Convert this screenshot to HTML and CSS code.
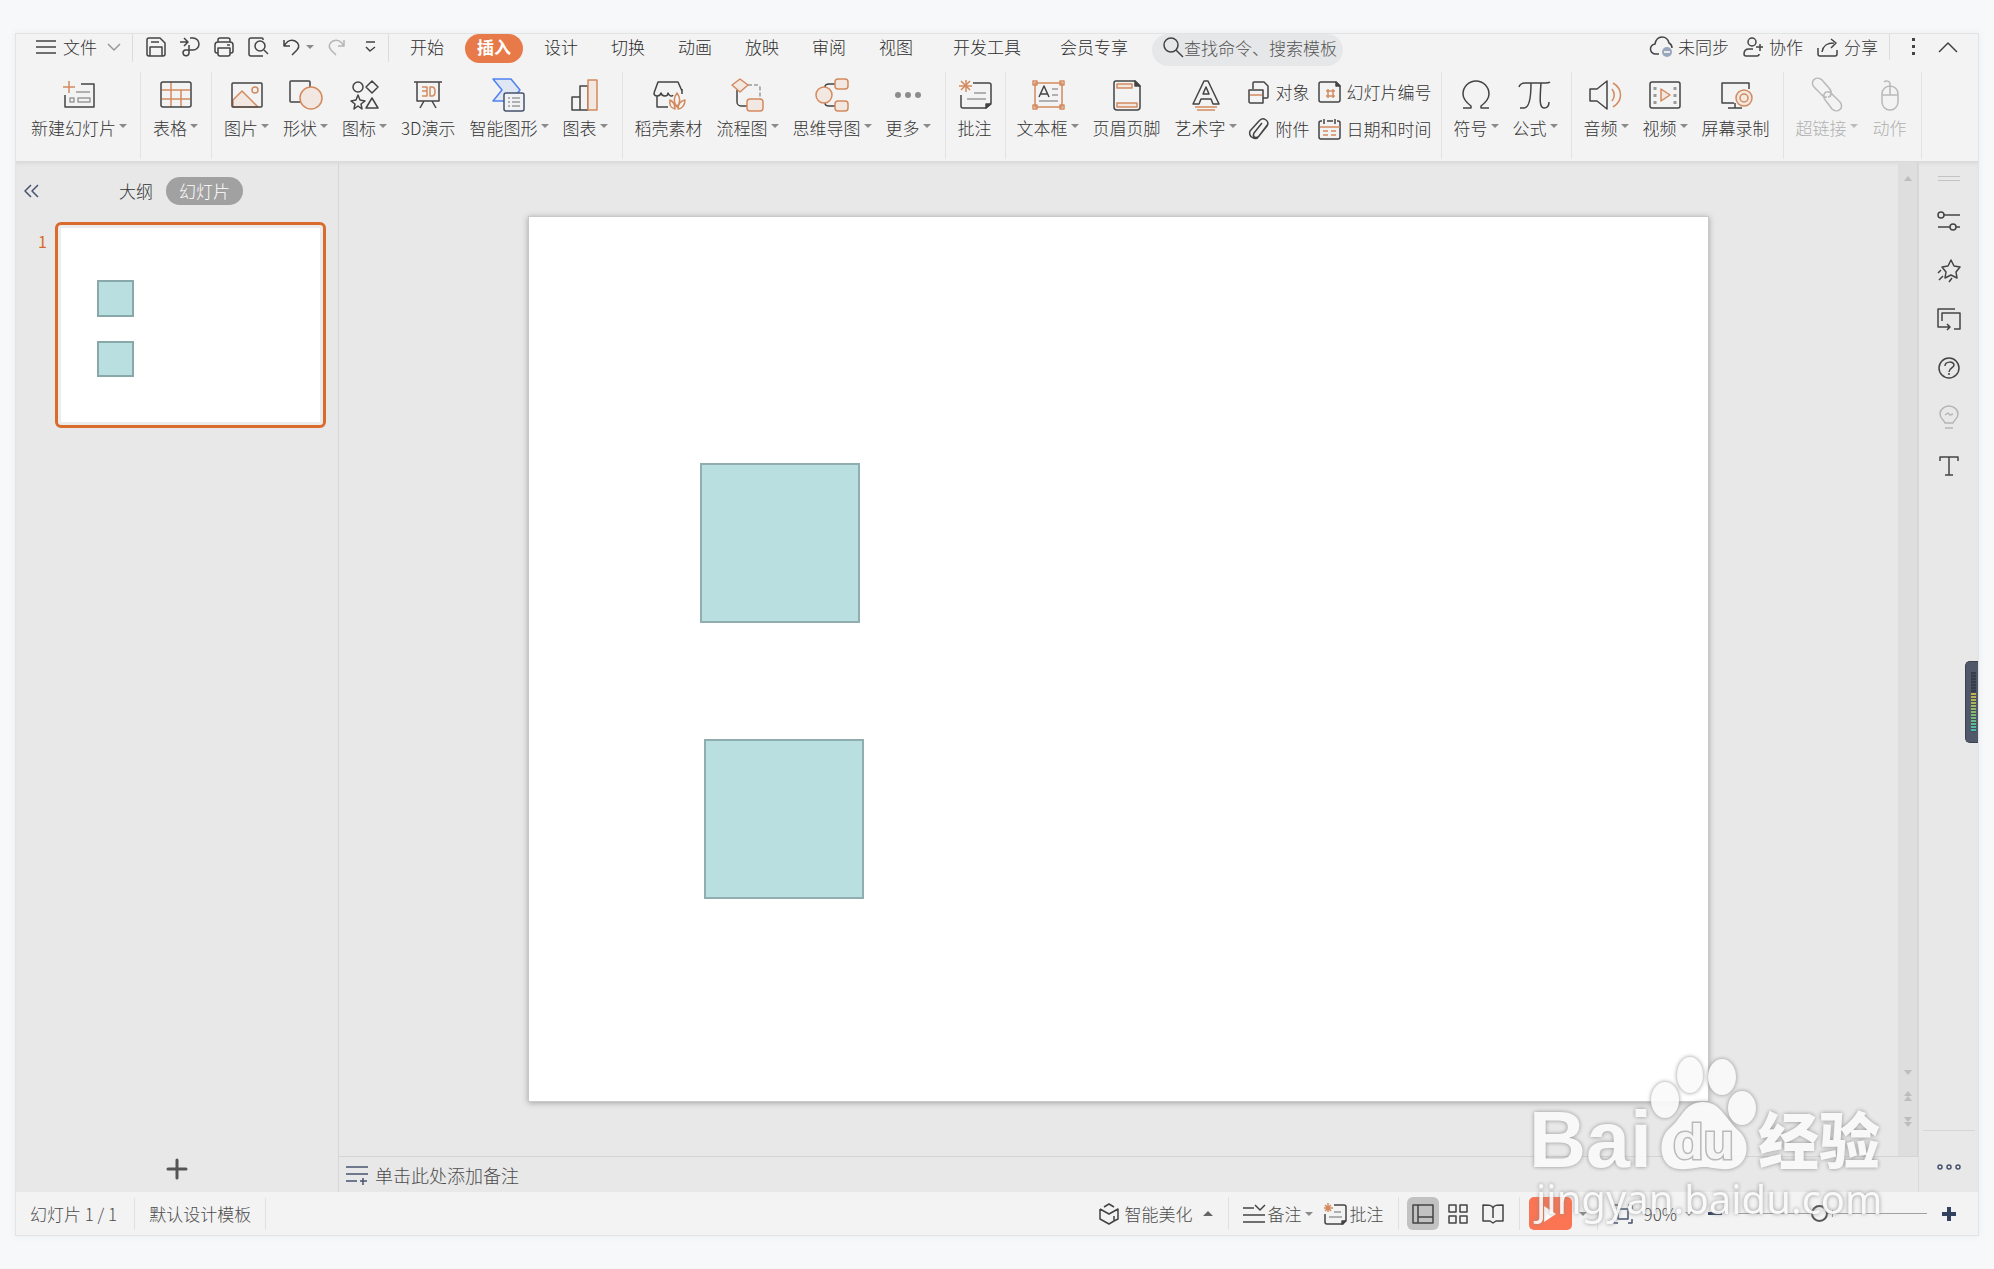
FILE: index.html
```html
<!DOCTYPE html>
<html lang="zh-CN">
<head>
<meta charset="utf-8">
<title>演示文稿</title>
<link rel="stylesheet" href="styles.css">
</head>
<body>
<div class="window">
  <header class="menubar">
    <button class="file-menu"><svg class="i" width="20" height="20" viewBox="0 0 20 20"><path d="M0 4h20M0 10h20M0 16h20"/></svg><span>文件</span><svg class="i faint" width="14" height="10" viewBox="0 0 14 10"><path d="M1 2l6 6 6-6"/></svg></button>
    <div class="quick">
      <button aria-label="保存"><svg class="i" width="20" height="20" viewBox="0 0 20 20"><path d="M3 1h11l5 5v11a2 2 0 0 1-2 2H3a2 2 0 0 1-2-2V3a2 2 0 0 1 2-2zM5 5h8M4 19v-9h12v9"/></svg></button>
      <button aria-label="输出"><svg class="i" width="20" height="20" viewBox="0 0 20 20"><path d="M0 5h7M4 1l4 4-4 4M10 1h3a6 6 0 0 1 0 12H5a3 3 0 1 0 4 3V8"/></svg></button>
      <button aria-label="打印"><svg class="i" width="20" height="20" viewBox="0 0 20 20"><path d="M4 5V3a2 2 0 0 1 2-2h8a2 2 0 0 1 2 2v2M4 16H3a2 2 0 0 1-2-2V8a3 3 0 0 1 3-3h12a3 3 0 0 1 3 3v6a2 2 0 0 1-2 2h-1M4 11h12v6a2 2 0 0 1-2 2H6a2 2 0 0 1-2-2zM13 8h3"/></svg></button>
      <button aria-label="打印预览"><svg class="i" width="21" height="20" viewBox="0 0 21 20"><path d="M15 3V2a1 1 0 0 0-1-1H3a2 2 0 0 0-2 2v14a2 2 0 0 0 2 2h12"/><circle cx="12" cy="9" r="5"/><path d="M16 13l4 4"/></svg></button>
      <button aria-label="撤销" class="undo"><svg class="i" width="17" height="18" viewBox="0 0 17 18"><path d="M1 2v6h6M1 8c3-5 7-7 11-5 4 2 5 6 2 9l-5 5"/></svg><i class="caret"></i></button>
      <button aria-label="恢复"><svg class="i pale" width="17" height="18" viewBox="0 0 17 18"><path d="M16 2v6h-6M16 8c-3-5-7-7-11-5-4 2-5 6-2 9l5 5"/></svg></button>
      <button aria-label="自定义" class="custom"><svg class="i" width="11" height="12" viewBox="0 0 11 12"><path d="M1 1h9M1 6l4 4 5-4"/></svg></button>
    </div>
    <nav class="tabs">
      <button>开始</button><button class="active">插入</button><button>设计</button><button>切换</button><button>动画</button><button>放映</button><button>审阅</button><button>视图</button>
      <div class="extra"><button>开发工具</button><button>会员专享</button></div>
    </nav>
    <label class="search"><svg class="i" width="22" height="22" viewBox="0 0 22 22"><circle cx="9" cy="9" r="7"/><path d="M14 14l7 7"/></svg><input type="text" aria-label="搜索" placeholder="查找命令、搜索模板"></label>
    <div class="account">
      <button><svg class="i" width="23" height="22" viewBox="0 0 23 22"><path d="M9 18H6a5 5 0 0 1-1-10C6 3 9 1 12 1c4 0 6 2 7 6 2 1 3 3 3 5"/><circle cx="17" cy="16" r="5" fill="#9aa6bb" stroke="none"/><path stroke="#fff" d="M14 16h6"/></svg>未同步</button>
      <button><svg class="i" width="21" height="20" viewBox="0 0 21 20"><circle cx="9" cy="5" r="4"/><path d="M10 12H6c-3 0-5 2-5 5 0 1 1 2 2 2h11c1 0 2-1 2-2M17 7v7M13 10h7"/></svg>协作</button>
      <button><svg class="i" width="22" height="20" viewBox="0 0 22 20"><path d="M1 11v6a2 2 0 0 0 2 2h15a2 2 0 0 0 2-2v-4M5 15c1-6 4-9 12-9M14 2l5 4-5 5"/></svg>分享</button>
    </div>
    <button class="more" aria-label="更多选项"><svg width="4" height="18" viewBox="0 0 4 18"><path fill="#444" d="M0 0h3v3H0zM0 7h3v3H0zM0 14h3v3H0z"/></svg></button>
    <button class="fold" aria-label="折叠功能区"><svg class="i" width="20" height="12" viewBox="0 0 20 12"><path d="M1 11l9-9 9 9"/></svg></button>
  </header>

  <section class="ribbon">
    <div class="group first">
      <button class="tool"><svg class="i" viewBox="0 0 36 36"><path d="M20 8h13v23H4V19"/><path class="o" d="M2 11h12M8 5v12"/><path class="g" d="M15 16h14M9 22h4v4H9zM17 22h12v4H17z"/></svg><span>新建幻灯片<i class="caret"></i></span></button>
    </div>
    <div class="group">
      <button class="tool"><svg class="i" viewBox="0 0 36 36"><path class="o" d="M4 14h28M4 23h28M13 6v25M23 14v17"/><rect x="3" y="6" width="30" height="25" rx="2"/></svg><span>表格<i class="caret"></i></span></button>
    </div>
    <div class="group roomy">
      <button class="tool"><svg class="i" viewBox="0 0 36 36"><path class="of" d="M4 24l9-9 16 16H4z"/><circle class="o" cx="26" cy="14" r="3"/><rect x="3" y="7" width="30" height="24" rx="1"/></svg><span>图片<i class="caret"></i></span></button>
      <button class="tool"><svg class="i" viewBox="0 0 36 36"><rect x="2" y="5" width="20" height="21" rx="1"/><circle class="of solid" cx="23" cy="22" r="11"/></svg><span>形状<i class="caret"></i></span></button>
      <button class="tool"><svg class="i" viewBox="0 0 36 36"><circle cx="11" cy="11" r="5"/><path d="M25 5l6 6-6 6-6-6zM25 22l6 10H19zM11 19l2 5 5 1-4 3 1 5-4-3-4 3 1-5-4-3 5-1z"/></svg><span>图标<i class="caret"></i></span></button>
      <button class="tool"><svg class="i" viewBox="0 0 36 36"><path d="M4 6h28M7 6v19h22V6M14 25l-4 7M22 25l4 7"/><path class="o" d="M12 11h5v9h-5M12 15h5M20 11h2c4 0 4 9 0 9h-2z"/></svg><span>3D演示</span></button>
      <button class="tool"><svg class="i" viewBox="0 0 36 36"><path fill="#dfe7f5" stroke="#4f83f0" d="M2 3h18l9 11-9 11H2l9-11z"/><rect x="13" y="17" width="20" height="18" rx="2" fill="#f1f2f5" stroke="#46516b"/><path class="g" d="M17 22h2M17 26h2M17 30h2M21 22h8M21 26h8M21 30h8"/></svg><span>智能图形<i class="caret"></i></span></button>
      <button class="tool"><svg class="i" viewBox="0 0 36 36"><path d="M5 21h8v13H5zM13 10h8v24h-8z"/><path class="of" d="M21 4h9v30h-9z"/></svg><span>图表<i class="caret"></i></span></button>
    </div>
    <div class="group roomy">
      <button class="tool"><svg class="i" viewBox="0 0 36 36"><path d="M17 31H6V20M3 17l4-11h20l4 9M3 17c0 4 6 4 7 0 1 4 7 4 7 0 1 3 4 4 5 2M31 13v5"/><path class="o" d="M26 31c-4-5-3-10 0-14 3 4 4 9 0 14zM24 33c-4-1-6-4-5-9 4 2 5 5 5 9zM27 33c0-5 3-8 7-9 0 5-3 9-7 9z"/></svg><span>稻壳素材</span></button>
      <button class="tool"><svg class="i" viewBox="0 0 36 36"><path d="M7 14v12a4 4 0 0 0 4 4h6"/><path class="g" stroke-dasharray="4 2" d="M18 9h9a3 3 0 0 1 3 3v11"/><path class="of" d="M2 9l8-6 8 6-8 7z"/><rect class="of" x="17" y="23" width="16" height="12" rx="3"/></svg><span>流程图<i class="caret"></i></span></button>
      <button class="tool"><svg class="i" viewBox="0 0 36 36"><path d="M11 11c0-3 2-3 4-3h6M11 27c0 3 2 3 4 3h6"/><circle class="of" cx="10" cy="19" r="8"/><rect class="of" x="21" y="3" width="13" height="10" rx="3"/><rect class="of" x="21" y="25" width="13" height="10" rx="3"/></svg><span>思维导图<i class="caret"></i></span></button>
      <button class="tool"><svg viewBox="0 0 36 36"><g fill="#8c8c8c"><circle cx="8" cy="19" r="3"/><circle cx="18" cy="19" r="3"/><circle cx="28" cy="19" r="3"/></g></svg><span>更多<i class="caret"></i></span></button>
    </div>
    <div class="group tight">
      <button class="tool"><svg class="i" viewBox="0 0 36 36"><path d="M16 7h16a2 2 0 0 1 2 2v18l-5 5H6a2 2 0 0 1-2-2V19"/><path fill="#444" d="M29 32v-4h5z"/><path class="o" d="M9 4v12M2 10h13M4 5l9 9M13 5l-9 9"/><path class="g" d="M17 17h12M10 23h19"/></svg><span>批注</span></button>
    </div>
    <div class="group tight">
      <button class="tool"><svg class="i" viewBox="0 0 36 36"><path class="o" d="M5 7h27v24H5zM3 5h4v4H3zM30 5h4v4h-4zM3 29h4v4H3zM30 29h4v4h-4z"/><path d="M9 21l5-11 5 11M11 18h6"/><path class="g" d="M22 13h6M22 19h6M9 25h19"/></svg><span>文本框<i class="caret"></i></span></button>
      <button class="tool"><svg class="i" viewBox="0 0 36 36"><path d="M7 5h19l5 5v21a3 3 0 0 1-3 3H8a3 3 0 0 1-3-3V7a2 2 0 0 1 2-2z"/><path fill="#444" d="M26 5v5h5z"/><path class="of" d="M8 8h15v4H8zM8 27h20v4H8z"/></svg><span>页眉页脚</span></button>
      <button class="tool"><svg class="i" viewBox="0 0 36 36"><path d="M5 28L16 5h4l11 23h-6l-2-5H13l-2 5zM15 18l3-7 3 7z"/><path class="o" d="M7 31h22M9 34h18"/></svg><span>艺术字<i class="caret"></i></span></button>
      <div class="pairs">
        <button><svg class="i" viewBox="0 0 24 24"><path d="M6 9V3a1 1 0 0 1 1-1h10l4 4v11a1 1 0 0 1-1 1h-4M2 10h14v13H3l-1-1z"/><path class="o" d="M3 15h12"/></svg>对象</button>
        <button><svg class="i" viewBox="0 0 24 24"><path d="M3 2h15l4 4v14a2 2 0 0 1-2 2H3a2 2 0 0 1-2-2V4a2 2 0 0 1 2-2z"/><path fill="#444" d="M18 2v4h4z"/><path class="o" d="M8 11h9M8 16h9M10 9v9M15 9v9"/></svg>幻灯片编号</button>
        <button><svg class="i" viewBox="0 0 24 24"><path d="M21 7l-9 12c-3 5-11 1-9-5l9-10c4-5 11 0 8 5l-8 10c-3 3-7 1-5-3l8-10"/></svg>附件</button>
        <button><svg class="i" viewBox="0 0 24 24"><path d="M4 4H3a2 2 0 0 0-2 2v14a2 2 0 0 0 2 2h17a2 2 0 0 0 2-2V6a2 2 0 0 0-2-2h-1M9 4h6M6 2v5M17 2v5"/><path class="o" d="M2 10h20M5 14h5M13 14h5M5 18h5M13 18h5"/></svg>日期和时间</button>
      </div>
    </div>
    <div class="group">
      <button class="tool"><svg class="i" viewBox="0 0 36 36"><path d="M5 32h8v-2c-4-3-8-7-8-12a13 13 0 0 1 26 0c0 5-4 9-8 12v2h8"/></svg><span>符号<i class="caret"></i></span></button>
      <button class="tool"><svg class="i" viewBox="0 0 36 36"><path d="M2 11c1-3 3-4 6-4h20c3 0 4 0 5-1M14 7c0 17-2 25-7 25H3M24 7c-1 15-2 25 3 25 3 0 5-2 5-6"/></svg><span>公式<i class="caret"></i></span></button>
    </div>
    <div class="group">
      <button class="tool"><svg class="i" viewBox="0 0 36 36"><path d="M2 13h7l10-8v28l-10-8H2z"/><path class="o" d="M24 13c3 4 3 8 0 12M25 7c10 6 10 18 0 24"/></svg><span>音频<i class="caret"></i></span></button>
      <button class="tool"><svg class="i" viewBox="0 0 36 36"><rect x="3" y="6" width="30" height="26" rx="2"/><path class="of" d="M14 13l9 6-9 6z"/><path class="g dots" stroke-dasharray="3 4" d="M8 11v17M28 11v17"/></svg><span>视频<i class="caret"></i></span></button>
      <button class="tool"><svg class="i" viewBox="0 0 36 36"><path d="M16 27H4V7h27v6M10 32h14M17 27v5"/><circle class="of solid" cx="26" cy="22" r="8"/><circle class="o" cx="26" cy="22" r="4"/></svg><span>屏幕录制</span></button>
    </div>
    <div class="group">
      <button class="tool" disabled><svg class="i" viewBox="0 0 36 36"><path d="M18 21c-3 1-4-1-8-5l-5-5c-5-6 3-12 8-7l7 8c4 4 2 9-1 9M18 16c3-1 4 1 8 5l5 5c5 6-3 12-8 7l-6-8c-4-4-2-9 1-9"/></svg><span>超链接<i class="caret"></i></span></button>
      <button class="tool" disabled><svg class="i" viewBox="0 0 36 36"><path d="M10 18a8 8 0 0 1 16 0v8a8 8 0 0 1-16 0zM10 19h16M18 19V8c0-3-4-4-6-2"/></svg><span>动作</span></button>
    </div>
  </section>

  <main class="workspace">
    <aside class="outline">
      <div class="outline-head">
        <button aria-label="收起"><svg class="i navy" width="16" height="14" viewBox="0 0 16 14"><path d="M7 1L1 7l6 6M14 1L8 7l6 6"/></svg></button>
        <div class="outline-tabs"><button>大纲</button><button class="active">幻灯片</button></div>
      </div>
      <div class="thumb-row"><span class="num">1</span>
        <div class="thumb"><div class="page"><i class="shape t1"></i><i class="shape t2"></i></div></div>
      </div>
      <button class="add" aria-label="新建幻灯片"><svg width="22" height="22" viewBox="0 0 22 22"><path fill="none" stroke="#555" stroke-width="3" stroke-linecap="round" d="M2 11h18M11 2v18"/></svg></button>
    </aside>
    <div class="editor">
      <div class="stage-row">
        <div class="stage"><div class="slide"><i class="shape s1"></i><i class="shape s2"></i></div></div>
        <div class="scroll"><i class="up"></i><span></span><i class="down"></i><i class="up"></i><i class="up near"></i><i class="down"></i><i class="down near"></i></div>
      </div>
      <div class="notes"><svg class="i navy" width="22" height="20" viewBox="0 0 22 20"><path d="M0 2h22M0 9h22M0 16h11M14 16h7M17 13v7"/></svg><span>单击此处添加备注</span></div>
    </div>
    <aside class="rail">
      <i class="grip"></i>
      <button aria-label="属性"><svg class="i" viewBox="0 0 24 24"><circle cx="4" cy="6" r="3"/><circle cx="16" cy="18" r="3"/><path d="M7 6h16M1 18h12M19 18h4"/></svg></button>
      <button aria-label="动画"><svg class="i" viewBox="0 0 24 24"><path d="M14 2l3 6 6 1-4 5 1 6-6-3-6 3 1-6-4-5 6-1zM4 12l-3 3M6 18l-4 4M15 20l-3 4"/></svg></button>
      <button aria-label="切换"><svg class="i" viewBox="0 0 24 24"><path d="M18 2H1v18h12M10 17l3 3-3 3M5 14V6h18v16h-6"/></svg></button>
      <button aria-label="帮助"><svg class="i" viewBox="0 0 24 24"><circle cx="12" cy="12" r="10"/><path d="M8 10c0-5 9-5 9-1 0 3-5 3-5 7M12 17v2"/></svg></button>
      <button aria-label="提示"><svg class="i pale" viewBox="0 0 24 24"><path d="M8 18c0-2-5-4-5-9a9 8 0 0 1 18 0c0 5-5 7-5 9zM8 23h8M8 10l3-2 2 2 3-1"/></svg></button>
      <button aria-label="文字"><svg class="i" viewBox="0 0 24 24"><path d="M3 7V3h18v4M12 3v18M8 21h8"/></svg></button>
      <button class="rail-more" aria-label="更多"><svg class="i navy" viewBox="0 0 24 24"><circle cx="3" cy="12" r="2"/><circle cx="12" cy="12" r="2"/><circle cx="21" cy="12" r="2"/></svg></button>
    </aside>
  </main>

  <footer class="status">
    <span class="cell page-no">幻灯片 1 / 1</span><span class="cell">默认设计模板</span>
    <div class="tools">
      <button class="beauty"><svg class="i" width="20" height="22" viewBox="0 0 20 22"><path d="M5 4l5-3 5 3M1 6v10l9 5 5-3M1 6l9 5 9-5v10l-4 2v-5"/></svg>智能美化<i class="caret flip"></i></button>
      <div class="pane">
        <button class="memo"><svg class="i" width="22" height="20" viewBox="0 0 22 20"><path d="M0 4h11M0 11h22M0 18h22M12 1l5 5 5-5"/></svg>备注<i class="caret"></i></button>
        <button class="comment"><svg class="i" width="24" height="22" viewBox="0 0 24 22"><path d="M11 2h10a2 2 0 0 1 2 2v13l-3 4H4a2 2 0 0 1-2-2v-8"/><path fill="#444" d="M19 21v-3h4z"/><path class="o" d="M5 0v9M1 5h9M2 2l6 6M8 2L2 8"/><path class="g" d="M11 9h7M6 14h13"/></svg>批注</button>
      </div>
      <div class="views">
        <button class="view active" aria-label="普通视图"><svg class="i" width="20" height="20" viewBox="0 0 20 20"><path d="M0 1h20v18H0zM5 1v18M5 13h15"/></svg></button>
        <button class="view" aria-label="幻灯片浏览"><svg class="i" width="20" height="20" viewBox="0 0 20 20"><path d="M1 1h7v7H1zM12 1h7v7h-7zM1 12h7v7H1zM12 12h7v7h-7z"/></svg></button>
        <button class="view" aria-label="阅读视图"><svg class="i" width="22" height="20" viewBox="0 0 22 20"><path d="M11 4c-1-3-4-3-10-3v16h7l3 2 3-2h7V1c-6 0-9 0-10 3v10"/></svg></button>
      </div>
      <div class="show"><button class="play" aria-label="放映"><svg width="14" height="18" viewBox="0 0 14 18"><path fill="#fff" d="M1 1l12 8-12 8z"/></svg></button><i class="caret"></i></div>
      <div class="zoom">
        <button aria-label="适应窗口"><svg class="i navy" width="20" height="20" viewBox="0 0 20 20"><path d="M1 5V1h4M15 1h4v4M19 15v4h-4M5 19H1v-4M5 5h10v10H5z"/></svg></button>
        <button class="pct">90%<i class="caret"></i></button>
        <button aria-label="缩小"><svg width="14" height="14" viewBox="0 0 14 14"><path fill="#33425e" d="M0 5h14v3H0z"/></svg></button>
        <input type="range" min="0" max="100" value="43" aria-label="缩放">
        <button aria-label="放大"><svg width="14" height="14" viewBox="0 0 14 14"><path fill="#33425e" d="M0 5h5V0h4v5h5v4H9v5H5V9H0z"/></svg></button>
      </div>
    </div>
  </footer>
  <div class="meter"><i></i></div>
</div>

<svg class="watermark" width="370" height="190" viewBox="0 0 370 190">
  <g class="mark">
    <text class="bai" x="-1" y="114">Bai</text>
    <ellipse cx="135" cy="47" rx="14" ry="18"/><ellipse cx="160" cy="22" rx="13" ry="18"/><ellipse cx="192" cy="24" rx="14" ry="18"/><ellipse cx="212" cy="55" rx="14" ry="17"/>
    <path d="M173 49c-18 0-21 16-33 26-13 10-12 40 9 41 12 1 18-2 25-2s14 3 25 2c20-3 22-26 11-37-15-13-19-30-37-30z"/>
    <text class="jy" x="228" y="111">经验</text>
    <text class="url" x="6" y="161">jingyan.baidu.com</text>
  </g>
  <text class="du" x="143" y="106">du</text>
</svg>
</body>
</html>
```
FILE: styles.css
```css
* { box-sizing: border-box; }
body {
  margin: 0;
  min-height: 100vh;
  padding: 33px 15px;
  display: flex;
  flex-direction: column;
  position: relative;
  background: #f7f8fa;
  color: #333;
  font: 300 17px/20px "Noto Sans CJK SC", sans-serif;
}
button, input {
  font: inherit;
  color: inherit;
  background: none;
  border: 0;
  padding: 0;
  margin: 0;
}
button {
  display: inline-flex;
  align-items: center;
  justify-content: center;
  white-space: nowrap;
}
svg { display: block; flex: none; overflow: visible; }
.i { fill: none; stroke: #444; stroke-width: 1.5; stroke-linejoin: round; }
.i .o { stroke: #d38a5e; }
.i .of { stroke: #d38a5e; fill: #f2e7e1; }
.i .g { stroke: #9a9a9a; }
.i .dots { stroke-width: 3; }
.i.faint { stroke: #999; }
.i.pale { stroke: #b5b5b5; }
.i.navy { stroke: #47536e; }
.caret {
  display: inline-block;
  flex: none;
  border: 4px solid transparent;
  border-top-color: #8a8a8a;
  border-bottom: 0;
}
.caret.flip { border-top: 0; border-bottom: 5px solid #666; }

.window {
  flex: 1;
  display: flex;
  flex-direction: column;
  position: relative;
  background: #f3f3f3;
  border: 1px solid #e2e4e4;
  box-shadow: 0 0 8px rgba(0, 0, 0, .05);
}

/* menu bar */
.menubar { display: flex; align-items: flex-start; height: 32px; padding-right: 20px; }
.menubar button { height: 26px; }
.file-menu { padding: 0 11px 0 20px; gap: 7px; }
.file-menu span { margin-right: 3px; }
.quick {
  display: flex;
  gap: 14px;
  height: 28px;
  border: solid #dcdcdc;
  border-width: 0 1px;
  padding: 0 12px 0 13px;
}
.undo { gap: 6px; }
.custom { margin-left: 6px; }
.tabs { display: flex; gap: 9px; padding-left: 9px; color: #2c2c2c; }
.tabs button { padding: 0 12px; }
.tabs .active { height: 29px; padding-bottom: 3px; border-radius: 15px; background: #e87a4a; color: #fff; font-weight: 700; }
.extra { display: flex; gap: 15px; padding: 0 3px 0 7px; }
.search {
  display: flex;
  align-items: center;
  height: 32px;
  width: 191px;
  margin-left: 9px;
  padding: 0 0 6px 10px;
  background: #e6e7e9;
  border-radius: 16px;
}
.search input { flex: 1; min-width: 0; height: 24px; outline: 0; }
.search input::placeholder { color: #555; opacity: 1; }
.account {
  display: flex;
  gap: 14px;
  margin-left: auto;
  padding-right: 11px;
  border-right: 1px solid #dcdcdc;
}
.account button { gap: 5px; }
.more { padding: 0 22px; }

/* ribbon */
.ribbon { display: flex; height: 96px; border-bottom: 1px solid #dadada; padding: 6px 0 2px; }
.group {
  display: flex;
  align-items: flex-start;
  gap: 14px;
  padding: 4px 13px 0 12px;
  border-right: 1px solid #e3e3e3;
}
.group.first { padding-left: 15px; }
.group.roomy { padding-right: 14px; }
.group.tight { padding: 4px 12px 0 11px; }
.tool { flex-direction: column; gap: 6px; }
.tool svg { width: 36px; height: 36px; }
.tool span { display: flex; align-items: center; gap: 3px; }
.tool .caret { margin-bottom: 4px; }
.tool .solid { fill: #f2e7e1; }
.tool:disabled { color: #b0b0b0; }
.tool:disabled .i { stroke: #b9b9b9; }
.tool:disabled .caret { border-top-color: #bbb; }
.pairs { display: grid; grid-template-columns: auto auto; gap: 13px 8px; padding-top: 4px; margin: 0 -3px 0 -4px; }
.pairs button { gap: 5px; justify-content: flex-start; }
.pairs svg { width: 24px; height: 24px; }

/* workspace */
.workspace { flex: 1; display: flex; background: #e8e8e8; box-shadow: inset 0 3px 3px -1px #dcdcdc; }
.outline { width: 323px; display: flex; flex-direction: column; border-right: 1px solid #d6d6d6; }
.outline-head { display: flex; align-items: center; padding: 15px 8px 0; }
.outline-tabs { display: flex; margin-left: 66px; }
.outline-tabs button { height: 28px; padding: 0 13px; }
.outline-tabs .active { background: #a1a1a1; color: #fff; border-radius: 14px; }
.thumb-row { display: flex; margin: 17px 12px 0 22px; }
.num { width: 17px; padding-top: 9px; font-size: 16px; font-weight: 400; color: #d96a2b; }
.thumb { flex: 1; border: 3px solid #d96c2d; border-radius: 6px; padding: 3px; background: #ececec; }
.page, .slide { position: relative; background: #fff; }
.page { aspect-ratio: 4 / 3; }
.shape { position: absolute; background: #badfe1; border: 2px solid #88a8aa; width: 14%; aspect-ratio: 1; }
.t1 { left: 14%; top: 27%; }
.t2 { left: 14%; top: 58%; }
.add { margin: auto 0 12px; align-self: center; }
.editor { flex: 1; display: flex; flex-direction: column; min-width: 0; }
.stage-row { flex: 1; display: flex; }
.stage { flex: 1; display: flex; align-items: center; justify-content: center; }
.slide { width: 75.6%; aspect-ratio: 4 / 3; box-shadow: 0 0 0 1px #c9c9c9, 0 1px 6px 1px #a4a4a4; }
.slide .shape { width: 160px; border-color: #90aeb0; }
.s1 { left: 14.5%; top: 27.8%; }
.s2 { left: 14.8%; top: 59%; }
.scroll {
  width: 20px;
  display: flex;
  flex-direction: column;
  align-items: center;
  background: #dedede;
  border-right: 1px solid #d4d4d4;
  padding: 14px 0 29px;
}
.scroll span { flex: 1; }
.scroll i { border: 4px solid transparent; margin-bottom: 16px; }
.scroll .up { border-top: 0; border-bottom: 5px solid #bdbdbd; }
.scroll .down { border-bottom: 0; border-top: 5px solid #bdbdbd; }
.scroll i:nth-last-child(2), .scroll i:nth-last-child(4) { margin-bottom: 0; }
.scroll .near:last-child { margin-bottom: 0; }
.notes {
  display: flex;
  align-items: center;
  gap: 7px;
  height: 36px;
  padding: 0 0 0 7px;
  border-top: 1px solid #d4d4d4;
  font-size: 18px;
  color: #4c4c4c;
}
.rail { width: 60px; display: flex; flex-direction: column; align-items: center; gap: 25px; padding-top: 14px; border-left: 1px solid #dadada; }
.grip { width: 22px; height: 5px; border: solid #c3c3c3; border-width: 1px 0; margin-bottom: 3px; }
.rail svg { width: 24px; height: 24px; }
.rail-more { margin-top: auto; width: 52px; height: 62px; padding-top: 10px; border-top: 1px solid #d6d6d6; }

/* status bar */
.status { display: flex; align-items: center; height: 43px; color: #4c4c4c; }
.cell { line-height: 32px; padding: 0 14px; border-right: 1px solid #e0e0e0; }
.page-no { padding-right: 17px; }
.tools { margin-left: auto; display: flex; align-items: center; padding-right: 22px; }
.tools > * { display: flex; align-items: center; height: 33px; }
.tools > :not(:last-child) { border-right: 1px solid #e0e0e0; }
.beauty { gap: 6px; padding-right: 15px; }
.beauty .caret { margin-left: 4px; border-width: 0 5px 5px; }
.pane { padding: 0 14px 0 14px; gap: 10px; }
.memo, .comment { gap: 3px; }
.views { padding: 0 10px 0 8px; gap: 3px; }
.view { width: 32px; height: 33px; border-radius: 6px; }
.view.active { background: #c2c2c2; }
.show { padding: 0 10px 0 9px; gap: 7px; }
.play { width: 43px; height: 33px; border-radius: 5px; background: #fb7453; }
.zoom { gap: 15px; padding-left: 15px; }
.zoom .pct { gap: 8px; margin-left: -4px; }
input[type="range"] {
  appearance: none;
  width: 190px;
  height: 18px;
  background: linear-gradient(#999, #999) center / 1px 7px no-repeat, linear-gradient(#a0a0a0, #a0a0a0) center / 100% 1px no-repeat;
}
input[type="range"]::-webkit-slider-thumb {
  appearance: none;
  width: 17px;
  height: 17px;
  border: 2px solid #555;
  border-radius: 50%;
  background: #f3f3f3;
}

/* level meter docked on the window edge */
.meter {
  position: absolute;
  right: 0;
  top: 52%;
  width: 13px;
  height: 82px;
  margin-top: 2px;
  padding: 10px 2px 10px 5px;
  background: #515869;
  border: 1px solid #3c4250;
  border-right: 0;
  border-radius: 5px 0 0 5px;
}
.meter i {
  display: block;
  height: 100%;
  background: repeating-linear-gradient(transparent 0 2px, #444b59 2px 3px), linear-gradient(#363d4a 34%, #c8b04e 35%, #8cbb6b 65%, #45b9ae);
}

.watermark { position: absolute; right: 94px; bottom: 26px; pointer-events: none; }
.mark { fill: #fafafa; filter: drop-shadow(0 0 2px #8a8a8a); opacity: .92; }
.bai, .du { font: 700 79px "Liberation Sans", sans-serif; }
.du { font-size: 50px; fill: #f5f5f5; stroke: #b9b9b9; stroke-width: 3px; paint-order: stroke; }
.jy { font: 900 61px "Noto Sans CJK SC", sans-serif; }
.url { font: 400 40px "Noto Sans", sans-serif; }
```
